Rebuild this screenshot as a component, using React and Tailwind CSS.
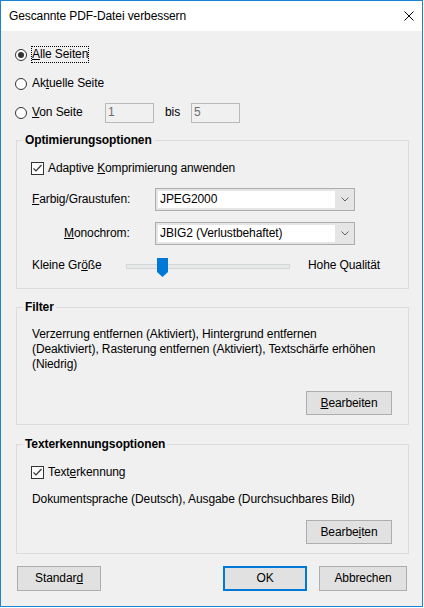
import React from 'react';

function Radio({ checked }) {
  return (
    <span className="flex h-[12px] w-[12px] shrink-0 items-center justify-center rounded-full border border-[#333333] bg-white">
      {checked && <span className="h-[6px] w-[6px] rounded-full bg-[#333333]" />}
    </span>
  );
}

function Checkbox() {
  return (
    <span className="flex h-[13px] w-[13px] shrink-0 items-center justify-center border border-[#333333] bg-white">
      <svg width="11" height="11" viewBox="0 0 11 11">
        <polyline points="1.5,5.5 4,8 9.5,2" fill="none" stroke="#333333" strokeWidth="1.2" />
      </svg>
    </span>
  );
}

function Combo({ value }) {
  return (
    <div className="flex h-[23px] w-[200px] border border-[#adadad] bg-[#e5e5e5] p-[2px] pr-0">
      <div className="flex flex-1 items-center bg-white pl-[2px]">{value}</div>
      <div className="flex w-[19px] items-center justify-center">
        <svg width="8" height="5" viewBox="0 0 8 5">
          <polyline points="0.5,0.5 4,4 7.5,0.5" fill="none" stroke="#606060" strokeWidth="1" />
        </svg>
      </div>
    </div>
  );
}

function Button({ children, className = '' }) {
  return (
    <button className={`flex items-center justify-center border border-[#adadad] bg-[#e1e1e1] text-black ${className}`}>
      {children}
    </button>
  );
}

function Group({ title, className = '', children }) {
  return (
    <fieldset className={`ml-[1px] w-[393px] border border-[#dcdcdc] ${className}`}>
      <legend className="ml-[6px] px-[2px] font-bold leading-[16px]">{title}</legend>
      {children}
    </fieldset>
  );
}

export default function App() {
  return (
    <div className="h-[607px] w-[423px] border border-[#1883d7] bg-[#f0f0f0] font-['Liberation_Sans',sans-serif] text-[12px] leading-[15px] tracking-[-0.1px] text-black">
      {/* title bar */}
      <div className="flex h-[30px] items-center justify-between bg-white pl-[8px] pr-[8px]">
        <span>Gescannte PDF-Datei verbessern</span>
        <svg width="10" height="10" viewBox="0 0 10 10">
          <path d="M0.5 0.5 L9.5 9.5 M9.5 0.5 L0.5 9.5" stroke="#000" strokeWidth="1" />
        </svg>
      </div>

      <div className="pl-[14px] pt-[9px]">
        {/* page range */}
        <div className="flex h-[29px] items-center">
          <Radio checked />
          <span className="ml-[4px] border border-dotted border-black">
            <u>A</u>lle Seiten
          </span>
        </div>
        <div className="flex h-[29px] items-center">
          <Radio />
          <span className="ml-[4px] border border-transparent">
            Ak<u>t</u>uelle Seite
          </span>
        </div>
        <div className="flex h-[29px] items-center">
          <Radio />
          <span className="ml-[4px] w-[74px] border border-transparent">
            <u>V</u>on Seite
          </span>
          <div className="flex h-[20px] w-[49px] items-center border border-[#b9b9b9] bg-[#f0f0f0] pl-[2px] text-[#6d6d6d]">1</div>
          <span className="ml-[11px] w-[26px]">bis</span>
          <div className="flex h-[20px] w-[49px] items-center border border-[#b9b9b9] bg-[#f0f0f0] pl-[2px] text-[#6d6d6d]">5</div>
        </div>

        {/* Optimierungsoptionen */}
        <Group title="Optimierungsoptionen" className="mt-[5px]">
          <div className="pb-[11px]">
            <div className="mt-[12px] flex h-[16px] items-center pl-[14px]">
              <Checkbox />
              <span className="ml-[4px]">
                Adaptive <u>K</u>omprimierung anwenden
              </span>
            </div>
            <div className="mt-[12px] flex h-[23px] items-center pl-[15px]">
              <span className="w-[123px]">
                <u>F</u>arbig/Graustufen:
              </span>
              <Combo value="JPEG2000" />
            </div>
            <div className="mt-[11px] flex h-[23px] items-center pl-[47px]">
              <span className="w-[91px]">
                <u>M</u>onochrom:
              </span>
              <Combo value="JBIG2 (Verlustbehaftet)" />
            </div>
            <div className="mt-[13px] flex h-[19px] items-start pl-[15px]">
              <span className="w-[94px]">
                Kleine Gr<u>ö</u>ße
              </span>
              <div className="relative h-[19px] w-[164px]">
                <div className="mt-[6px] h-[5px] w-full border border-[#d6d6d6] bg-[#e7eaea]" />
                <svg className="absolute left-[31px] top-0" width="11" height="19" viewBox="0 0 11 19">
                  <polygon points="0,0 11,0 11,14 5.5,19 0,14" fill="#0078d7" />
                </svg>
              </div>
              <span className="ml-[18px]">Hohe Qualität</span>
            </div>
          </div>
        </Group>

        {/* Filter */}
        <Group title="Filter" className="mt-[10px]">
          <div className="pb-[9px]">
            <p className="mt-[12px] pl-[15px]">
              Verzerrung entfernen (Aktiviert), Hintergrund entfernen
              <br />
              (Deaktiviert), Rasterung entfernen (Aktiviert), Textschärfe erhöhen
              <br />
              (Niedrig)
            </p>
            <div className="mt-[19px] flex justify-end pr-[16px]">
              <Button className="h-[24px] w-[86px]">
                <span>
                  <u>B</u>earbeiten
                </span>
              </Button>
            </div>
          </div>
        </Group>

        {/* Texterkennungsoptionen */}
        <Group title="Texterkennungsoptionen" className="mt-[11px]">
          <div className="pb-[9px]">
            <div className="mt-[12px] flex h-[16px] items-center pl-[14px]">
              <Checkbox />
              <span className="ml-[4px]">
                Text<u>e</u>rkennung
              </span>
            </div>
            <p className="mt-[12px] pl-[15px]">Dokumentsprache (Deutsch), Ausgabe (Durchsuchbares Bild)</p>
            <div className="mt-[13px] flex justify-end pr-[16px]">
              <Button className="h-[24px] w-[86px]">
                <span>
                  Bearbe<u>i</u>ten
                </span>
              </Button>
            </div>
          </div>
        </Group>

        {/* dialog buttons */}
        <div className="mt-[12px] flex">
          <Button className="ml-[2px] h-[25px] w-[84px]">
            <span>
              Standar<u>d</u>
            </span>
          </Button>
          <button className="ml-[122px] flex h-[25px] w-[84px] items-center justify-center border-2 border-[#0078d7] bg-[#e1e1e1]">
            OK
          </button>
          <Button className="ml-[12px] h-[25px] w-[88px]">Abbrechen</Button>
        </div>
      </div>
    </div>
  );
}
